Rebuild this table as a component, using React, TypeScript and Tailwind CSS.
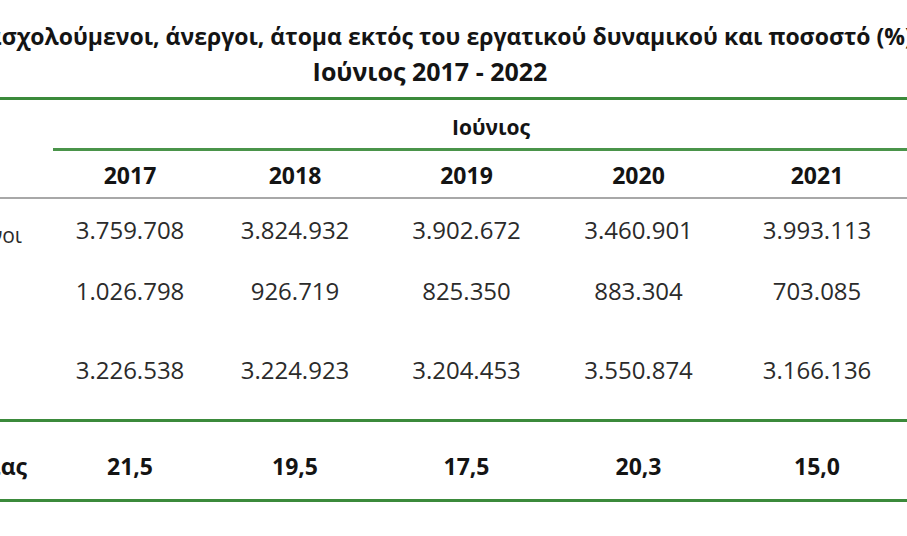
const years = ["2017", "2018", "2019", "2020", "2021"];

const rows = [
  {
    label: "Απασχολούμενοι",
    values: ["3.759.708", "3.824.932", "3.902.672", "3.460.901", "3.993.113"],
    height: "h-[62px]",
    labelPad: "pr-[31px] pt-[12px]",
  },
  {
    label: "Άνεργοι",
    values: ["1.026.798", "926.719", "825.350", "883.304", "703.085"],
    height: "h-[59px]",
    labelPad: "pr-[60px]",
  },
  {
    label: "Εκτός εργατικού δυναμικού",
    values: ["3.226.538", "3.224.923", "3.204.453", "3.550.874", "3.166.136"],
    height: "h-[99px]",
    labelPad: "pr-[60px]",
  },
];

const rates = ["21,5", "19,5", "17,5", "20,3", "15,0"];

const cols = "grid grid-cols-[53px_154px_176px_167px_177px_180px]";

export default function App() {
  return (
    <div
      className="w-[907px] h-[536px] overflow-hidden bg-white text-[#141414]"
      style={{ fontFamily: "'Open Sans', 'Noto Sans', sans-serif" }}
    >
      {/* Title */}
      <div className="h-[97px] pt-[19px] font-bold text-[23px] leading-[35px]">
        <div className="-ml-[46px] whitespace-nowrap">
          Απασχολούμενοι, άνεργοι, άτομα εκτός του εργατικού δυναμικού και ποσοστό (%)
        </div>
        <div className="w-[860px] text-center whitespace-nowrap text-[25px]">Ιούνιος 2017 - 2022</div>
      </div>
      <div className="h-[3px] bg-[#3b8a3b]" />

      {/* Month header */}
      <div className={cols}>
        <div />
        <div className="col-span-5 pt-[12px] pb-[6px] pl-[22px] text-center font-bold text-[21px] leading-[30px]">
          Ιούνιος
        </div>
      </div>
      <div className="ml-[53px] h-[3px] bg-[#4a944a]" />

      {/* Years */}
      <div className={`${cols} pt-[9px] pb-[7px]`}>
        <div />
        {years.map((y) => (
          <div key={y} className="text-center font-bold text-[23px] leading-[30px]">
            {y}
          </div>
        ))}
      </div>
      <div className="h-[2px] bg-[#a8a8a8]" />

      {/* Data rows */}
      {rows.map((r) => (
        <div key={r.label} className={`${cols} ${r.height} items-center text-[#2b2b2b]`}>
          <div className={`flex justify-end overflow-hidden whitespace-nowrap text-[21px] ${r.labelPad}`}>
            {r.label}
          </div>
          {r.values.map((v, i) => (
            <div key={i} className="text-center text-[24px] leading-[30px]">
              {v}
            </div>
          ))}
        </div>
      ))}
      <div className="h-[3px] bg-[#3b8a3b]" />

      {/* Unemployment rate */}
      <div className={`${cols} pt-[29px] pb-[18px] font-bold text-[23px] leading-[30px]`}>
        <div className="flex justify-end overflow-hidden whitespace-nowrap pr-[26px]">
          Ποσοστό ανεργίας
        </div>
        {rates.map((v, i) => (
          <div key={i} className="text-center">
            {v}
          </div>
        ))}
      </div>
      <div className="h-[3px] bg-[#3b8a3b]" />
    </div>
  );
}
